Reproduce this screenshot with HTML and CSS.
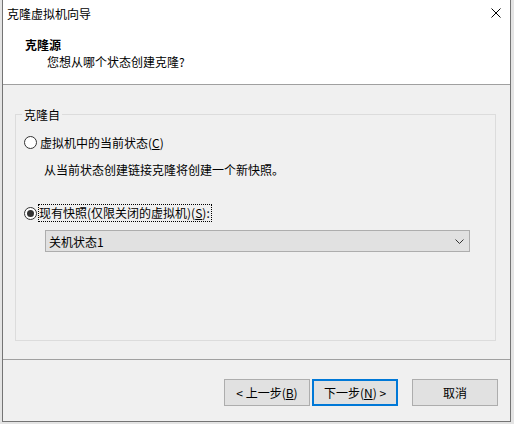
FILE: index.html
```html
<!DOCTYPE html>
<html lang="zh-CN">
<head>
<meta charset="utf-8">
<title>克隆虚拟机向导</title>
<link rel="stylesheet" href="styles.css">
</head>
<body>
<div class="window">
  <div class="header">
    <div class="titlebar">
      <span class="title">克隆虚拟机向导</span>
      <svg class="close" width="10" height="10" viewBox="0 0 10 10"><path d="M0.5 0.5 L9.5 9.5 M9.5 0.5 L0.5 9.5" stroke="#000" stroke-width="1" fill="none"/></svg>
    </div>
    <div class="heading">克隆源</div>
    <div class="subheading">您想从哪个状态创建克隆?</div>
  </div>
  <div class="body">
    <fieldset class="group">
      <legend>克隆自</legend>
      <div class="option opt1">
        <span class="radio"></span>
        <span class="label">虚拟机中的当前状态(<u>C</u>)</span>
      </div>
      <div class="desc">从当前状态创建链接克隆将创建一个新快照。</div>
      <div class="option opt2">
        <span class="radio"><span class="dot"></span></span>
        <span class="label focus">现有快照(仅限关闭的虚拟机)(<u>S</u>):</span>
      </div>
      <div class="combo">
        <span class="combo-text">关机状态1</span>
        <svg class="chev" width="9" height="5" viewBox="0 0 9 5"><path d="M0.5 0.5 L4.5 4.5 L8.5 0.5" stroke="#333" stroke-width="1" fill="none"/></svg>
      </div>
    </fieldset>
  </div>
  <div class="footer">
    <button class="btn">&lt; 上一步(<u>B</u>)</button>
    <button class="btn primary">下一步(<u>N</u>) &gt;</button>
    <button class="btn cancel">取消</button>
  </div>
</div>
</body>
</html>
```
FILE: styles.css
```css
html, body {
  margin: 0;
  padding: 0;
}
body {
  background: #e4e4e4;
  width: 514px;
  height: 424px;
  overflow: hidden;
  font-family: "Noto Sans CJK SC", "Microsoft YaHei", sans-serif;
  font-size: 12px;
  color: #000;
}
.window {
  margin-left: 2px;
  width: 507px;
  border-left: 1px solid #747474;
  border-right: 1px solid #747474;
  border-bottom: 1px solid #747474;
  background: #f0f0f0;
}
.header {
  height: 84px;
  background: #fff;
  border-bottom: 1px solid #a0a0a0;
}
.titlebar {
  height: 26px;
  display: flex;
  align-items: center;
  padding-left: 4px;
  padding-right: 9px;
}
.title {
  line-height: 17px;
}
.close {
  margin-left: auto;
  display: block;
}
.heading {
  margin-top: 10px;
  padding-left: 22px;
  line-height: 17px;
  font-weight: bold;
}
.subheading {
  padding-left: 44px;
  line-height: 17px;
}
.body {
  height: 274px;
  box-sizing: content-box;
  padding: 21px 14px 0 12px;
  height: 253px;
  border-bottom: 1px solid #a0a0a0;
}
.group {
  margin: 0;
  box-sizing: border-box;
  height: 235px;
  border: 1px solid #dcdcdc;
  padding: 0 13px 0 7px;
  min-width: 0;
}
.group legend {
  padding: 0 2px;
  margin-left: -1px;
  line-height: 17px;
}
.option {
  display: flex;
  align-items: center;
  height: 18px;
}
.opt1 {
  margin-top: 10px;
}
.opt2 {
  margin-top: 26px;
}
.radio {
  width: 13px;
  height: 13px;
  box-sizing: border-box;
  border: 1px solid #333;
  border-radius: 50%;
  background: #fff;
  margin-left: 1px;
  display: flex;
  align-items: center;
  justify-content: center;
}
.dot {
  width: 7px;
  height: 7px;
  border-radius: 50%;
  background: #333;
}
.opt1 .label {
  margin-left: 3px;
  line-height: 17px;
}
.opt2 .label {
  margin-left: 1px;
  line-height: 16px;
}
.focus {
  border: 1px dotted #000;
  padding-right: 1px;
}
.desc {
  margin-top: 10px;
  margin-left: 21px;
  line-height: 17px;
}
.combo {
  margin-top: 8px;
  margin-left: 22px;
  width: 425px;
  height: 22px;
  box-sizing: border-box;
  border: 1px solid #adadad;
  background: #e1e1e1;
  display: flex;
  align-items: center;
  padding: 0 5px 0 3px;
}
.combo-text {
  line-height: 17px;
}
.chev {
  margin-left: auto;
  display: block;
}
.footer {
  height: 61px;
  box-sizing: border-box;
  padding: 19px 12px 0 0;
  display: flex;
  justify-content: flex-end;
  align-items: flex-start;
}
.btn {
  width: 86px;
  height: 27px;
  box-sizing: border-box;
  border: 1px solid #adadad;
  background: #e1e1e1;
  font-family: "Noto Sans CJK SC", "Microsoft YaHei", sans-serif;
  font-size: 12px;
  color: #000;
  padding: 0;
  margin: 0;
  line-height: 17px;
}
.primary {
  border: 2px solid #0078d7;
  margin-left: 2px;
}
.cancel {
  margin-left: 14px;
}
```
